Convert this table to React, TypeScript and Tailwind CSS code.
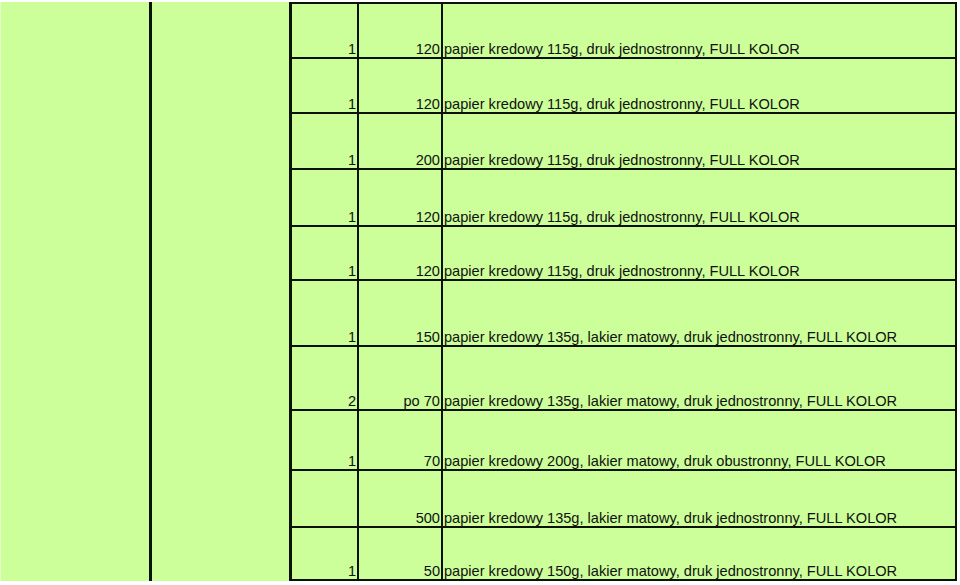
const rows = [
  { h: 55, a: "1", b: "120", c: "papier kredowy 115g, druk jednostronny, FULL KOLOR" },
  { h: 55, a: "1", b: "120", c: "papier kredowy 115g, druk jednostronny, FULL KOLOR" },
  { h: 56, a: "1", b: "200", c: "papier kredowy 115g, druk jednostronny, FULL KOLOR" },
  { h: 57, a: "1", b: "120", c: "papier kredowy 115g, druk jednostronny, FULL KOLOR" },
  { h: 54, a: "1", b: "120", c: "papier kredowy 115g, druk jednostronny, FULL KOLOR" },
  { h: 66, a: "1", b: "150", c: "papier kredowy 135g, lakier matowy, druk jednostronny, FULL KOLOR" },
  { h: 64, a: "2", b: "po 70", c: "papier kredowy 135g, lakier matowy, druk jednostronny, FULL KOLOR" },
  { h: 60, a: "1", b: "70", c: "papier kredowy 200g, lakier matowy, druk obustronny, FULL KOLOR" },
  { h: 57, a: "", b: "500", c: "papier kredowy 135g, lakier matowy, druk jednostronny, FULL KOLOR" },
  { h: 53, a: "1", b: "50", c: "papier kredowy 150g, lakier matowy, druk jednostronny, FULL KOLOR" },
];

export default function App() {
  return (
    <div
      className="w-[960px] h-[585px] bg-white pt-[2px] overflow-hidden text-[#111] text-[14.6px] leading-4"
      style={{ fontFamily: '"Liberation Sans", Arial, sans-serif' }}
    >
      <div className="flex w-[957px] h-[579px] bg-[#ccff99]">
        <div className="w-[149px] border-l border-[#e4ffcc]" />
        <div className="w-[3px] bg-[#0c1208]" />
        <div className="w-[137px]" />
        <div className="flex-1 flex flex-col border-l-[3px] border-t-2 border-r-2 border-[#0c1208]">
          {rows.map((r, i) => (
            <div
              key={i}
              className="flex border-b-2 border-[#0c1208]"
              style={{ height: r.h }}
            >
              <div className="w-[67px] border-r-2 border-[#0c1208] flex items-end justify-end pr-px">
                {r.a}
              </div>
              <div className="w-[84px] border-r-2 border-[#0c1208] flex items-end justify-end pr-px">
                {r.b}
              </div>
              <div className="flex-1 flex items-end pl-px whitespace-nowrap">{r.c}</div>
            </div>
          ))}
        </div>
      </div>
    </div>
  );
}
